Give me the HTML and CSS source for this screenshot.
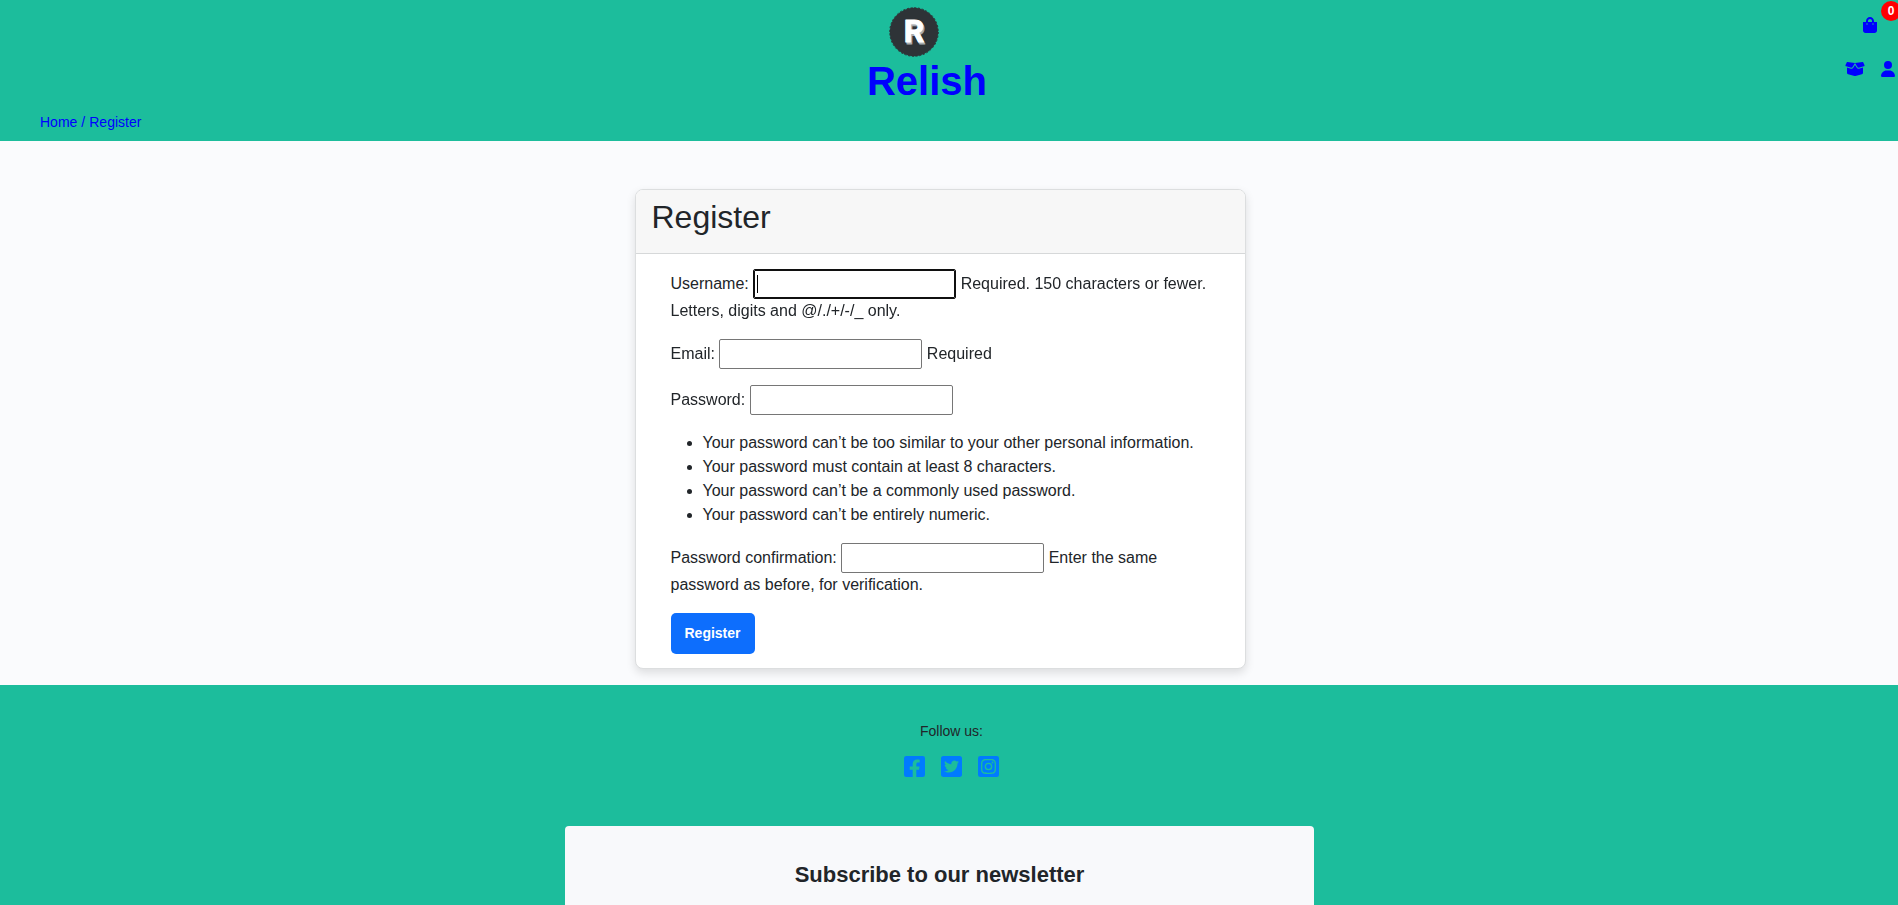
FILE: index.html
```html
<!DOCTYPE html>
<html lang="en">
<head>
<meta charset="utf-8">
<title>Relish - Register</title>
<link rel="stylesheet" href="styles.css">
</head>
<body>
<header class="header">
  <div class="header-top">
    <a class="brand" href="#">
      <svg class="brand-logo" viewBox="0 0 50 50" aria-hidden="true">
        <circle cx="25" cy="25" r="24.2" fill="#2e3337"/>
        <circle cx="25" cy="25" r="24.3" fill="none" stroke="#2e3337" stroke-width="1" stroke-dasharray="2.2 1.6"/>
        <g class="brand-letter" text-anchor="middle">
          <text x="26.3" y="36.5" fill="#a9adaf" stroke="#a9adaf">R</text>
          <text x="25" y="35" fill="#fff" stroke="#fff">R</text>
        </g>
      </svg>
      <span class="brand-name">Relish</span>
    </a>
    <nav class="tools" aria-label="Account">
      <a class="tool tool-bag" href="#" aria-label="Shopping bag">
        <svg width="14" height="16" viewBox="0 0 448 512"><path d="M352 160v-32C352 57.400 294.600 0 224 0S96 57.400 96 128v32H0v272c0 44.200 35.800 80 80 80h288c44.200 0 80-35.800 80-80V160h-96zm-192-32c0-35.300 28.700-64 64-64s64 28.700 64 64v32H160v-32zm160 120c-13.300 0-24-10.700-24-24s10.700-24 24-24 24 10.700 24 24-10.700 24-24 24zm-192 0c-13.300 0-24-10.700-24-24s10.700-24 24-24 24 10.700 24 24-10.700 24-24 24z"/></svg>
        <span class="badge">0</span>
      </a>
      <div class="tool-row">
        <a class="tool" href="#" aria-label="Orders">
          <svg width="20" height="16" viewBox="0 0 640 512"><path d="M58.900 42.100c3-6.100 9.600-9.600 16.300-8.700L320 64 564.800 33.400c6.700-.8 13.300 2.700 16.300 8.700l41.700 83.400c9 17.900-.6 39.600-19.800 45.100L439.600 217.300c-13.900 4-28.800-1.900-36.200-14.300L320 64 236.600 203c-7.400 12.400-22.300 18.300-36.200 14.300L37.100 170.600c-19.300-5.500-28.800-27.200-19.800-45.100L58.900 42.100zM321.100 128l54.900 91.400c14.900 24.800 44.600 36.600 72.500 28.600L576 211.600v167c0 22-15 41.200-36.400 46.600l-204.100 51c-10.200 2.600-20.900 2.600-31 0l-204.100-51C79 419.700 64 400.500 64 378.500v-167L191.600 248c27.800 8 57.600-3.800 72.500-28.600L318.900 128h2.200z"/></svg>
        </a>
        <a class="tool" href="#" aria-label="Profile">
          <svg width="14" height="16" viewBox="0 0 448 512"><path d="M224 256a128 128 0 1 0 0-256 128 128 0 1 0 0 256zm-45.700 48C79.800 304 0 383.800 0 482.300 0 498.700 13.300 512 29.700 512h388.600c16.400 0 29.700-13.300 29.700-29.700C448 383.800 368.200 304 269.700 304h-91.400z"/></svg>
        </a>
      </div>
    </nav>
  </div>
  <nav class="crumbs" aria-label="Breadcrumb">
    <a href="#">Home</a><span>/</span><a href="#">Register</a>
  </nav>
</header>

<main class="main">
  <section class="card">
    <div class="card-header"><h1>Register</h1></div>
    <form class="card-body">
      <p><label for="username">Username:</label> <input class="field" id="username" type="text" autofocus> Required. 150 characters or fewer. Letters, digits and @/./+/-/_ only.</p>
      <p><label for="email">Email:</label> <input class="field" id="email" type="email"> Required</p>
      <p><label for="password">Password:</label> <input class="field" id="password" type="password"></p>
      <ul>
        <li>Your password can’t be too similar to your other personal information.</li>
        <li>Your password must contain at least 8 characters.</li>
        <li>Your password can’t be a commonly used password.</li>
        <li>Your password can’t be entirely numeric.</li>
      </ul>
      <p><label for="confirm">Password confirmation:</label> <input class="field" id="confirm" type="password"> Enter the same password as before, for verification.</p>
      <button class="submit" type="button">Register</button>
    </form>
  </section>
</main>

<footer class="footer">
  <div class="follow">
    <p>Follow us:</p>
    <div class="social">
      <a href="#" aria-label="Facebook"><svg viewBox="0 32 448 448"><path d="M400 32H48A48 48 0 0 0 0 80v352a48 48 0 0 0 48 48h137.300V327.700h-63V256h63v-54.600c0-62.200 37-96.500 93.700-96.500 27.100 0 55.500 4.800 55.500 4.800v61h-31.300c-30.800 0-40.400 19.100-40.400 38.700V256h68.800l-11 71.700h-57.800V480H400a48 48 0 0 0 48-48V80a48 48 0 0 0-48-48z"/></svg></a>
      <a href="#" aria-label="Twitter"><svg viewBox="0 32 448 448"><path d="M400 32H48C21.500 32 0 53.500 0 80v352c0 26.500 21.500 48 48 48h352c26.500 0 48-21.500 48-48V80c0-26.500-21.500-48-48-48zm-48.900 158.800c.2 2.800.2 5.700.2 8.500 0 86.700-66 186.600-186.600 186.600-37.200 0-71.700-10.800-100.700-29.400 5.300.6 10.400.8 15.800.8 30.700 0 58.900-10.400 81.400-28-28.800-.6-53-19.500-61.300-45.500 10.100 1.500 19.200 1.500 29.600-1.200-30-6.100-52.500-32.500-52.500-64.400v-.8c8.700 4.900 18.900 7.900 29.600 8.300a65.447 65.447 0 0 1-29.200-54.600c0-12.200 3.200-23.400 8.900-33.100 32.300 39.800 80.800 65.800 135.200 68.600-9.300-44.500 24-80.600 64-80.600 18.900 0 35.900 7.900 47.900 20.700 14.800-2.800 29-8.300 41.600-15.800-4.900 15.200-15.200 28-28.800 36.100 13.200-1.400 26-5.100 37.800-10.200-8.900 13.100-20.100 24.700-32.900 34z"/></svg></a>
      <a href="#" aria-label="Instagram"><svg viewBox="0 32 448 448"><path d="M224 202.700A53.300 53.300 0 1 0 277.400 256 53.400 53.400 0 0 0 224 202.700zm124.700-41a54 54 0 0 0-30.400-30.400c-21-8.300-71-6.400-94.300-6.400s-73.300-1.900-94.300 6.400a54 54 0 0 0-30.400 30.400c-8.300 21-6.400 71-6.400 94.300s-1.900 73.300 6.400 94.300a54 54 0 0 0 30.400 30.400c21 8.300 71 6.400 94.300 6.400s73.300 1.900 94.300-6.400a54 54 0 0 0 30.400-30.400c8.300-21 6.400-71 6.400-94.300s1.900-73.300-6.400-94.300zM224 338a82 82 0 1 1 0-164 82 82 0 0 1 0 164zm85.400-148.300a19.100 19.100 0 1 1 0-38.200 19.100 19.100 0 0 1 0 38.200zM400 32H48A48 48 0 0 0 0 80v352a48 48 0 0 0 48 48h352a48 48 0 0 0 48-48V80a48 48 0 0 0-48-48zm-17.100 290c-1.300 25.600-7.100 48.300-25.900 67s-41.300 24.600-66.900 25.800c-26.400 1.500-105.600 1.500-132 0-25.600-1.300-48.300-7.100-67-25.800s-24.600-41.400-25.800-67c-1.500-26.400-1.500-105.600 0-132 1.300-25.600 7.100-48.300 25.800-67s41.500-24.600 67-25.800c26.400-1.500 105.600-1.500 132 0 25.600 1.300 48.300 7.100 67 25.900s24.600 41.400 25.900 67c1.500 26.300 1.500 105.400-.1 131.900z"/></svg></a>
    </div>
  </div>
  <section class="newsletter">
    <h2>Subscribe to our newsletter</h2>
  </section>
</footer>
</body>
</html>
```
FILE: styles.css
```css
* {
  box-sizing: border-box;
}

body {
  display: flex;
  flex-direction: column;
  height: 100vh;
  margin: 0;
  overflow: hidden;
  background: #fafbfd;
  color: #212529;
  font-family: "Liberation Sans", Arial, sans-serif;
  font-size: 16px;
  line-height: 24px;
}

a {
  color: #00f;
  text-decoration: none;
}

/* Header */
.header {
  flex: none;
  padding: 7px 0;
  background: #1cbd9c;
}

.header-top {
  display: grid;
  grid-template-columns: 1fr auto 1fr;
}

.brand {
  grid-column: 2;
  display: flex;
  flex-direction: column;
  margin-right: 44px;
}

.brand-logo {
  width: 50px;
  height: 50px;
  margin-left: 22px;
}

.brand-letter {
  font-family: Roboto, sans-serif;
  font-size: 32px;
  font-weight: 700;
  stroke-width: 1;
  stroke-linejoin: round;
}

.brand-name {
  font-size: 40px;
  font-weight: 700;
  line-height: 48px;
}

.tools {
  display: flex;
  flex-direction: column;
  align-items: flex-end;
  gap: 28px;
  padding: 10px 3px 0 0;
}

.tool {
  position: relative;
  display: flex;
}

.tool svg {
  fill: currentColor;
}

.tool-bag {
  margin-right: 18px;
}

.tool-row {
  display: flex;
  gap: 16px;
}

.badge {
  position: absolute;
  right: -24px;
  bottom: 12px;
  width: 20px;
  height: 20px;
  border-radius: 50%;
  background: #f00;
  color: #fff;
  font-size: 12px;
  font-weight: 700;
  line-height: 20px;
  text-align: center;
}

.crumbs {
  display: flex;
  gap: 4px;
  padding: 5px 40px 0;
  color: #00f;
  font-size: 14px;
}

/* Registration card */
.main {
  flex: none;
  padding: 48px 18px 16px 0;
}

.card {
  width: 611px;
  max-width: 100%;
  margin: 0 auto;
  border: 1px solid #dcdedf;
  border-radius: 8px;
  background: #fff;
  box-shadow: 0 4px 10px rgba(0, 0, 0, 0.12);
}

.card-header {
  padding: 8px 16px 16px;
  border-bottom: 1px solid #d6d8d9;
  border-radius: 7px 7px 0 0;
  background: #f7f7f7;
}

.card-header h1 {
  margin: 0;
  font-size: 32px;
  font-weight: 400;
  line-height: 39px;
}

.card-body {
  padding: 15px 35px 14px;
}

.card-body p {
  margin: 0 0 16px;
}

.card-body ul {
  margin: 0 0 16px;
  padding-left: 32px;
}

.field {
  width: 203px;
  height: 30px;
  padding: 1px 2px;
  border: 1px solid #767676;
  border-radius: 2px;
  background: #fff;
  font: inherit;
}

.field:focus {
  border-color: #101010;
  outline: 1px solid #101010;
  outline-offset: -2px;
  background: linear-gradient(#000, #000) 3px 5px / 1px 18px no-repeat #fff;
  caret-color: transparent;
}

.submit {
  display: block;
  padding: 8px 14px;
  border: 0;
  border-radius: 5px;
  background: #0d6efd;
  color: #fff;
  font-family: inherit;
  font-size: 14px;
  font-weight: 700;
  line-height: 25px;
}

/* Footer */
.footer {
  flex: 1;
  display: flex;
  flex-direction: column;
  padding: 34px 19px 0 0;
  background: #1cbd9c;
}

.follow {
  display: flex;
  flex-direction: column;
  align-items: center;
  gap: 13px;
  padding: 0 0 49px 24px;
  font-size: 14px;
}

.follow p {
  margin: 0;
}

.social {
  display: flex;
  gap: 16px;
}

.social svg {
  display: block;
  width: 21px;
  height: 21px;
  fill: #007bff;
}

.newsletter {
  flex: 1;
  width: 749px;
  max-width: 100%;
  margin: 0 auto;
  padding: 36px 24px 0;
  border-radius: 4px 4px 0 0;
  background: #f8f9fb;
  text-align: center;
}

.newsletter h2 {
  margin: 0;
  font-size: 22px;
  line-height: 26px;
}
```
